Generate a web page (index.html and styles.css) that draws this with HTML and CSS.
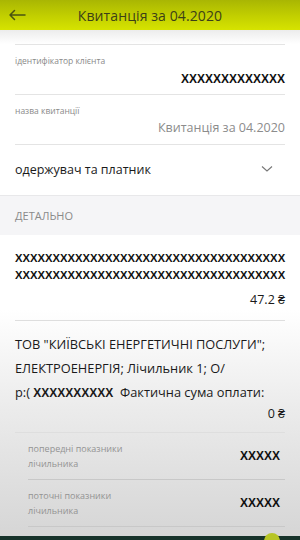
FILE: index.html
```html
<!DOCTYPE html>
<html lang="uk">
<head>
<meta charset="utf-8">
<link rel="stylesheet" href="styles.css">
</head>
<body>
<div class="screen">
  <header class="topbar">
    <svg class="back" width="18" height="12" viewBox="0 0 18 12"><path d="M17 6H2M6.5 1.5L2 6l4.5 4.5" fill="none" stroke="#4a5410" stroke-width="1.5" stroke-linecap="round" stroke-linejoin="round"/></svg>
    <h1 class="title">Квитанція за 04.2020</h1>
  </header>
  <div class="shade"></div>
  <main class="content">
    <div class="field">
      <div class="label">ідентифікатор клієнта</div>
      <div class="value bold">XXXXXXXXXXXXX</div>
    </div>
    <div class="field">
      <div class="label">назва квитанції</div>
      <div class="value muted">Квитанція за 04.2020</div>
    </div>
    <div class="collapse">
      <span>одержувач та платник</span>
      <svg width="12" height="8" viewBox="0 0 12 8"><path d="M1 1.5l5 4.5 5-4.5" fill="none" stroke="#777" stroke-width="1.1"/></svg>
    </div>
  </main>
  <div class="section">ДЕТАЛЬНО</div>
  <div class="details">
    <div class="block">
      <div class="xline">XXXXXXXXXXXXXXXXXXXXXXXXXXXXXXXXXXXX<br>XXXXXXXXXXXXXXXXXXXXXXXXXXXXXXXXXXXX</div>
      <div class="sum">47.2 ₴</div>
    </div>
    <div class="block second">
      <div class="desc">ТОВ "КИЇВСЬКІ ЕНЕРГЕТИЧНІ ПОСЛУГИ";<br>ЕЛЕКТРОЕНЕРГІЯ; Лічильник 1; О/<br>р:( <b>XXXXXXXXXX</b>&nbsp; Фактична сума оплати:</div>
      <div class="sum">0 ₴</div>
    </div>
    <div class="meters">
      <div class="meter">
        <div class="mlabel">попередні показники<br>лічильника</div>
        <div class="mval">XXXXX</div>
      </div>
      <div class="meter">
        <div class="mlabel">поточні показники<br>лічильника</div>
        <div class="mval">XXXXX</div>
      </div>
    </div>
  </div>
  <footer class="bottom"><span class="dot"></span></footer>
</div>
</body>
</html>
```
FILE: styles.css
```css
* { box-sizing: border-box; }
html, body { margin: 0; padding: 0; }
body {
  width: 300px;
  height: 540px;
  overflow: hidden;
  font-family: "Liberation Sans", Arial, sans-serif;
  color: #1a1a1a;
  background: #fff;
}
.screen {
  height: 540px;
  display: flex;
  flex-direction: column;
  background: linear-gradient(180deg, #fff 0px, #fff 310px, #ebebeb 410px, #d5d5d5 540px);
}
.topbar {
  height: 30px;
  flex: none;
  display: flex;
  align-items: center;
  position: relative;
  background: linear-gradient(180deg, #a9b603 0%, #c3d000 55%, #d6e300 100%);
}
.back { position: absolute; left: 8px; top: 9px; }
.title {
  margin: 0 auto;
  font-family: "Open Sans", sans-serif;
  font-weight: 400;
  font-size: 14px;
  color: #3c3f18;
  letter-spacing: 0.1px;
}
.shade {
  height: 14px;
  flex: none;
  background: linear-gradient(180deg, #ececec, #fff);
}
.content { padding: 0 15px; }
.field {
  border-top: 1px solid #e4e4e4;
  padding: 10px 0 0;
  height: 50px;
}
.label {
  font-family: "Open Sans", sans-serif;
  font-size: 8.5px;
  color: #8a8a8a;
  line-height: 12px;
}
.value {
  text-align: right;
  margin-top: 4px;
  line-height: 16px;
}
.bold { font-weight: 700; font-size: 12px; color: #111; }
.muted { font-family: "Open Sans", sans-serif; font-size: 12.5px; color: #8c8c8c; margin-top: 3px; }
.collapse {
  border-top: 1px solid #e4e4e4;
  height: 51px;
  display: flex;
  align-items: center;
  justify-content: space-between;
  padding-right: 12px;
  padding-bottom: 2px;
  font-family: "Open Sans", sans-serif;
  font-size: 12.5px;
  color: #1a1a1a;
}
.section {
  background: #f5f5f7;
  border-top: 1px solid #e8e8ea;
  height: 40px;
  padding: 0 15px;
  display: flex;
  align-items: center;
  font-family: "Open Sans", sans-serif;
  font-size: 11px;
  color: #8a8a8a;
  flex: none;
}
.details { padding: 0 15px; flex: 1; display: flex; flex-direction: column; }
.block {
  padding: 15px 0 11px;
  border-bottom: 1px solid #dedede;
}
.xline {
  font-weight: 700;
  font-size: 11.25px;
  line-height: 17px;
  color: #111;
}
.sum {
  text-align: right;
  font-family: "Open Sans", sans-serif;
  font-size: 12.5px;
  margin-top: 7px;
  line-height: 18px;
}
.desc {
  font-family: "Open Sans", sans-serif;
  font-size: 12.8px;
  line-height: 24px;
  color: #1a1a1a;
}
.desc b { font-family: "Liberation Sans", Arial, sans-serif; font-size: 12px; }
.second { padding-top: 11px; padding-bottom: 9px; }
.second .sum { margin-top: 0; }
.meters { padding-left: 13px; }
.meter {
  display: flex;
  justify-content: space-between;
  align-items: center;
  height: 47px;
  border-bottom: 1px solid #c8c8c8;
  padding: 0 5px 0 0;
}
.mlabel {
  font-family: "Open Sans", sans-serif;
  font-size: 9px;
  line-height: 15px;
  color: #939393;
}
.mval { font-weight: 700; font-size: 12px; color: #111; }
.bottom {
  height: 4px;
  flex: none;
  background: #17332a;
  position: relative;
}
.dot {
  position: absolute;
  left: 264px;
  top: -3px;
  width: 16px;
  height: 16px;
  border-radius: 50%;
  background: #b7c526;
}
```
